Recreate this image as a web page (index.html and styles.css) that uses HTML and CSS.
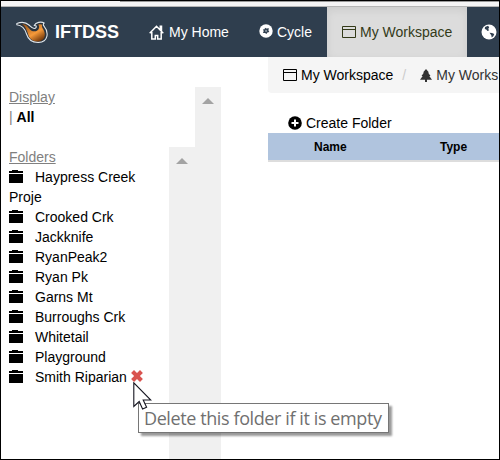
FILE: index.html
```
<!DOCTYPE html>
<html lang="en">
<head>
<meta charset="utf-8">
<title>IFTDSS - My Workspace</title>
<link rel="stylesheet" href="styles.css">
</head>
<body>
<svg class="defs" aria-hidden="true">
  <defs>
    <linearGradient id="flame" x1="0" y1="0" x2=".8" y2="1">
      <stop offset="0" stop-color="#8a4a14"/><stop offset=".6" stop-color="#f79a3a"/><stop offset="1" stop-color="#6b3208"/>
    </linearGradient>
    <symbol id="folder" viewBox="0 0 14 13"><path d="M0 1h3V0h6v1h5v2H0zM0 4h14v9H0z"/></symbol>
    <symbol id="window" viewBox="0 0 14 12"><path fill="none" stroke="currentColor" d="M.5.5h13v11H.5zM.5 3.500h13"/></symbol>
  </defs>
</svg>
<div class="window">
  <div class="chrome"><div class="chrome-tab"></div></div>
  <nav class="navbar">
    <a class="brand">
      <svg class="logo" viewBox="0 0 32 22"><path d="M.8 2.500C5 .8 10 1.300 13 4c2 2 3 3.500 5.200 3.500 1.800 0 2.600-1.900 1.600-2.700-.5-.4-1.200-.4-1.600-.2C19.800 1.200 25 .2 28.200 2c-1 .8-1.200 2-.2 3.200 5 6 4.500 15.800-5.500 16.200-6.500.2-10.500-3.500-12-8.400C9.300 9 6.500 4.500.8 3.800z" fill="#2b333c" stroke="#dfe5ea" stroke-width="1.100" stroke-linejoin="round"/><path d="M6 3c4-.2 6 3 8 5.500 2.500 2.800 8 2.500 9-1.500.4-1.800-.2-2.800-.8-3.300 1.800-.8 3.300-.4 4 0-.7 1.500 0 3 1 4.500 3.200 5 1.800 11.800-5 12.300-5.500.3-8.700-3-10-7C11 9 9 4.800 6 3z" fill="url(#flame)"/></svg>
      <span>IFTDSS</span>
    </a>
    <a class="nav-item home">
      <svg width="15" height="15" viewBox="0 0 15 15"><path fill="none" stroke="currentColor" stroke-width="1.500" d="M.7 8.200 7.500 1.300l6.800 6.900M2.800 7v7h3.500v-3.600h2.400V14h3.500V7M11.300 4.500V1.300h1.200v4.500"/></svg>
      <span>My Home</span>
    </a>
    <a class="nav-item cycle">
      <svg width="14" height="14" viewBox="0 0 14 14"><circle cx="7" cy="7" r="6.700" fill="currentColor"/><path fill="#2f3e4e" d="m6 3.800 1.300.8 2.600-.4-.5 2L10.300 8l-1.900.6L7.500 10 6 8.900l-2 .2.700-2-.8-1.700 1.700-.2z"/><circle cx="7.100" cy="6.900" r="1.100" fill="#8794a0"/></svg>
      <span>Cycle</span>
    </a>
    <a class="nav-item active">
      <svg class="win" width="14" height="12"><use href="#window"/></svg>
      <span>My Workspace</span>
    </a>
    <a class="nav-item map">
      <svg width="16" height="16" viewBox="0 0 16 16"><circle cx="8" cy="8" r="7.500" fill="currentColor"/><path fill="#2f3e4e" d="M4 3 7 1.800l1.200 1.400L7.200 5l1 1.200-1.700.8-1.300-1.600L3.800 5zM8.500 8.800l2.500.2 2.300 1-1 2.300-1.600 1.200-.4-2.300z"/></svg>
    </a>
  </nav>
  <div class="body">
    <aside class="sidebar">
      <div class="side-main">
        <div class="row heading"><u>Display</u></div>
        <div class="row"><span class="bar">|</span> <b>All</b></div>
        <div class="folders">
          <div class="folder-list">
            <div class="row heading"><u>Folders</u></div>
            <div class="row"><svg class="fi"><use href="#folder"/></svg>Haypress Creek<br>Proje</div>
            <div class="row"><svg class="fi"><use href="#folder"/></svg>Crooked Crk</div>
            <div class="row"><svg class="fi"><use href="#folder"/></svg>Jackknife</div>
            <div class="row"><svg class="fi"><use href="#folder"/></svg>RyanPeak2</div>
            <div class="row"><svg class="fi"><use href="#folder"/></svg>Ryan Pk</div>
            <div class="row"><svg class="fi"><use href="#folder"/></svg>Garns Mt</div>
            <div class="row"><svg class="fi"><use href="#folder"/></svg>Burroughs Crk</div>
            <div class="row"><svg class="fi"><use href="#folder"/></svg>Whitetail</div>
            <div class="row"><svg class="fi"><use href="#folder"/></svg>Playground</div>
            <div class="row"><svg class="fi"><use href="#folder"/></svg>Smith Riparian<svg class="remove" viewBox="0 0 12 12"><path d="M3 .1 6 3.100l3-3L11.900 3l-3 3 3 3L9 11.900l-3-3-3 3L.1 9l3-3-3-3z"/></svg></div>
          </div>
          <div class="scrollbar"><i></i></div>
        </div>
      </div>
      <div class="scrollbar"><i></i></div>
    </aside>
    <main class="content">
      <div class="breadcrumb">
        <svg class="win" width="14" height="12"><use href="#window"/></svg>
        <span class="crumb">My Workspace</span>
        <span class="sep">/</span>
        <svg class="tree" width="12" height="13" viewBox="0 0 12 13"><path d="m6 0 3 3.500H8L10.500 7H9.300L12 10.800H7V13H5v-2.200H0L2.700 7H1.500L4 3.500H3z"/></svg>
        <span class="crumb-next">My Works</span>
      </div>
      <div class="create">
        <svg width="14" height="14" viewBox="0 0 14 14"><circle cx="7" cy="7" r="6.800"/><path stroke="#fff" stroke-width="2" d="M7 3.500v7M3.500 7h7"/></svg>
        <span>Create Folder</span>
      </div>
      <div class="table-head"><span class="name">Name</span><span>Type</span></div>
    </main>
  </div>
  <div class="tooltip">Delete this folder if it is empty</div>
  <svg class="cursor" viewBox="0 0 19 28"><path d="M.8.800v23.700l5.400-5 3.400 7.500 4-1.800-3.400-7.200h7.600z" fill="#fff" stroke="#151520" stroke-width="1.100"/></svg>
</div>
</body>
</html>
```
FILE: styles.css
```
* { box-sizing: border-box; }
body { margin: 0; font: 14px/20px "Liberation Sans", Arial, sans-serif; color: #000; }
svg { display: block; flex: none; fill: currentColor; }
.defs { position: absolute; width: 0; height: 0; }
.window { position: relative; width: 500px; height: 460px; border: 1px solid #000; background: #fff; overflow: hidden; display: flex; flex-direction: column; }
.chrome { height: 6px; flex: none; background: #f5f4f5; border-bottom: 1px solid #b5b5b5; }
.chrome-tab { height: 1px; margin-left: 119px; background: #999; }
.navbar { height: 50px; flex: none; display: flex; background: #2f3e4e; color: #fff; overflow: hidden; }
.brand { width: 148px; flex: none; display: flex; align-items: center; padding-left: 15px; font-size: 18px; font-weight: bold; }
.brand span { margin-left: 7px; }
.logo { width: 32px; height: 22px; }
.nav-item { display: flex; align-items: center; flex: none; white-space: nowrap; }
.home { width: 110px; gap: 5px; }
.cycle { width: 68px; gap: 4px; }
.cycle svg { margin-top: -2px; }
.active { width: 140px; padding-left: 15px; gap: 4px; background: #dcdcdc; color: #333a18; box-shadow: inset 0 3px 9px rgba(0,0,0,.075); }
.map { padding-left: 14px; }
.body { display: flex; flex: 1; min-height: 0; }
.sidebar { width: 220px; margin-top: 30px; display: flex; flex: none; }
.side-main { width: 194px; padding-left: 8px; display: flex; flex-direction: column; }
.folders { display: flex; flex: 1; margin-top: 20px; }
.folder-list { width: 160px; }
.heading, .bar { color: #808080; }
.scrollbar { width: 26px; flex: none; background: #f0f0f0; padding: 11px 0 0 7px; }
.scrollbar i { display: block; width: 12px; height: 6px; background: #a3a3a3; clip-path: polygon(50% 0, 100% 100%, 0 100%); }
.fi { display: inline-block; width: 14px; height: 13px; margin-right: 12px; vertical-align: -1px; }
.remove { display: inline-block; width: 12px; height: 12px; margin-left: 4px; vertical-align: 0; color: #d9534f; }
.content { width: 231px; margin-left: 47px; flex: none; }
.breadcrumb { height: 36px; padding-left: 15px; display: flex; align-items: center; background: #f5f5f5; border-radius: 0 0 0 4px; white-space: nowrap; overflow: hidden; }
.crumb { margin-left: 4px; }
.sep { margin: 0 14px 0 9px; color: #ccc; }
.tree, .crumb-next { color: #333; }
.crumb-next { margin-left: 4px; }
.create { height: 40px; padding: 20px 0 0 20px; display: flex; align-items: center; gap: 4px; }
.table-head { height: 29px; display: flex; align-items: center; padding-left: 46px; background: #b0c4de; border-bottom: 2px solid #ddd; font-size: 12px; font-weight: bold; }
.name { width: 126px; }
.tooltip { position: absolute; left: 137px; top: 402px; width: 251px; height: 30px; padding-left: 5px; border: 1px solid #767676; background: #fff; color: #707070; box-shadow: 3px 3px 2px rgba(0,0,0,.4); font: 400 18px/29px "Open Sans", "Noto Sans", sans-serif; letter-spacing: -.4px; white-space: nowrap; }
.cursor { position: absolute; left: 132px; top: 381px; width: 19px; height: 28px; }
```
